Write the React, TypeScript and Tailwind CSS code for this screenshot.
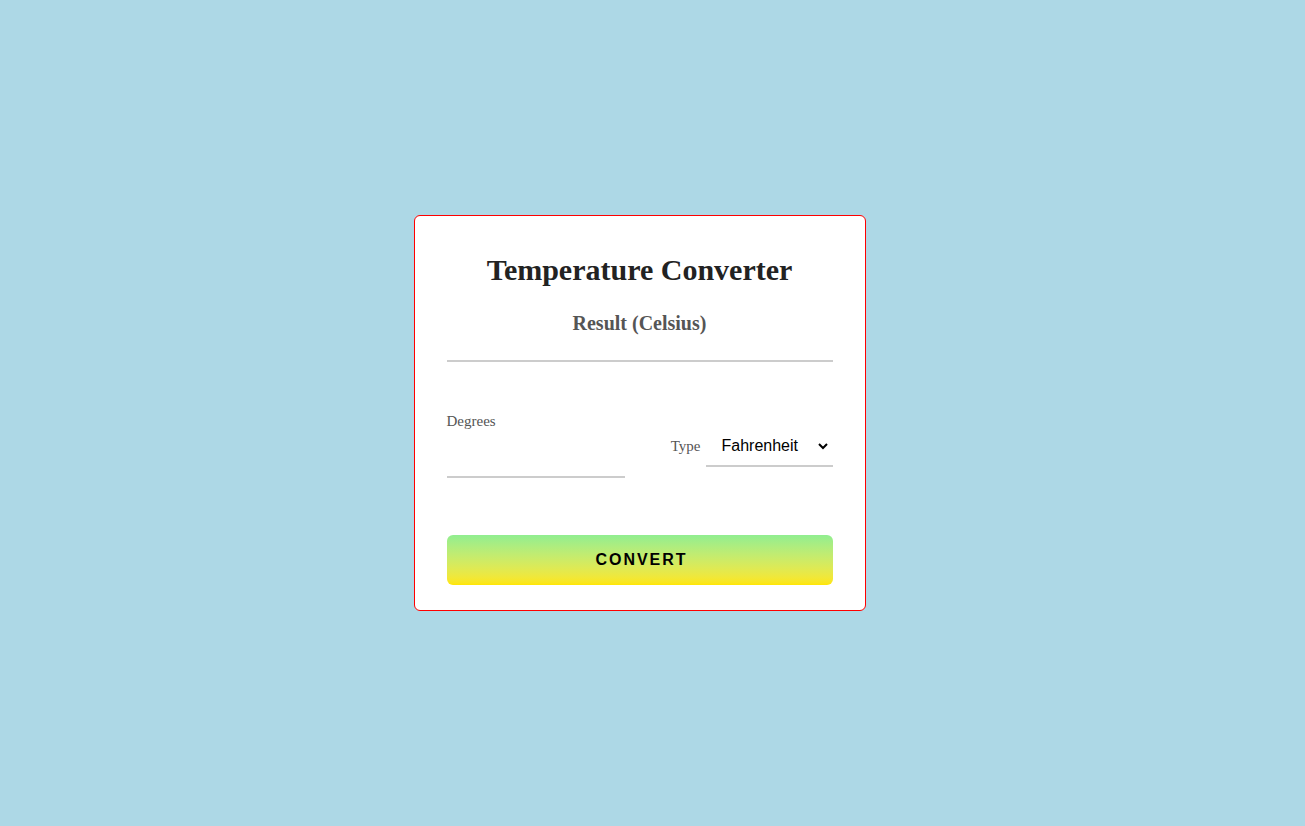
import React, { useState } from 'react';

const serif = "font-['Liberation_Serif','Times_New_Roman',serif]";
const sans = "font-['Liberation_Sans',Arial,sans-serif]";

const App = () => {
  const [degrees, setDegrees] = useState('');
  const [type, setType] = useState('Fahrenheit');

  return (
    <div className="min-h-screen w-full bg-[#add8e6] flex items-center justify-center pr-[26px]">
      <div className="w-[452px] bg-white border border-[#ff0000] rounded-[6px] px-8 pt-[34px] pb-[25px]">
        <h1 className={`${serif} text-[30px] font-bold text-[#222] text-center leading-[40px]`}>
          Temperature Converter
        </h1>
        <h2 className={`${serif} text-[20px] font-bold text-[#555] text-center mt-[21px] leading-[24px]`}>
          Result (Celsius)
        </h2>
        <div className="mt-[25px] h-[2px] bg-[#ccc]" />

        <div className="mt-[50px] flex items-center justify-between">
          <div className="flex flex-col w-[178px]">
            <label className={`${serif} text-[15px] text-[#555] leading-[18px]`}>Degrees</label>
            <input
              value={degrees}
              onChange={(e) => setDegrees(e.target.value)}
              className={`${sans} mt-[12px] h-[36px] border-b-2 border-[#ccc] outline-none text-[16px]`}
            />
          </div>
          <div className="flex items-center gap-[4px] mt-[2px]">
            <span className={`${serif} text-[15px] text-[#555] mr-[1px]`}>Type</span>
            <div className="relative w-[127px] border-b-2 border-[#ccc]">
              <select
                value={type}
                onChange={(e) => setType(e.target.value)}
                className={`${sans} appearance-none w-full h-[39px] pl-[16px] pr-6 pt-[1px] text-[16px] text-black bg-transparent outline-none`}
              >
                <option>Fahrenheit</option>
                <option>Celsius</option>
                <option>Kelvin</option>
              </select>
              <svg
                className="pointer-events-none absolute right-[4px] top-[15px]"
                width="12"
                height="10"
                viewBox="0 0 12 10"
                fill="none"
              >
                <path d="M2 3 L6 7 L10 3" stroke="#000" strokeWidth="2" />
              </svg>
            </div>
          </div>
        </div>

        <button
          className={`${sans} mt-[57px] w-full h-[50px] rounded-[6px] bg-gradient-to-b from-[#90ee90] to-[#ffe600] pl-[4px] text-[16px] font-bold tracking-[2px] text-black`}
        >
          CONVERT
        </button>
      </div>
    </div>
  );
};

export default App;
